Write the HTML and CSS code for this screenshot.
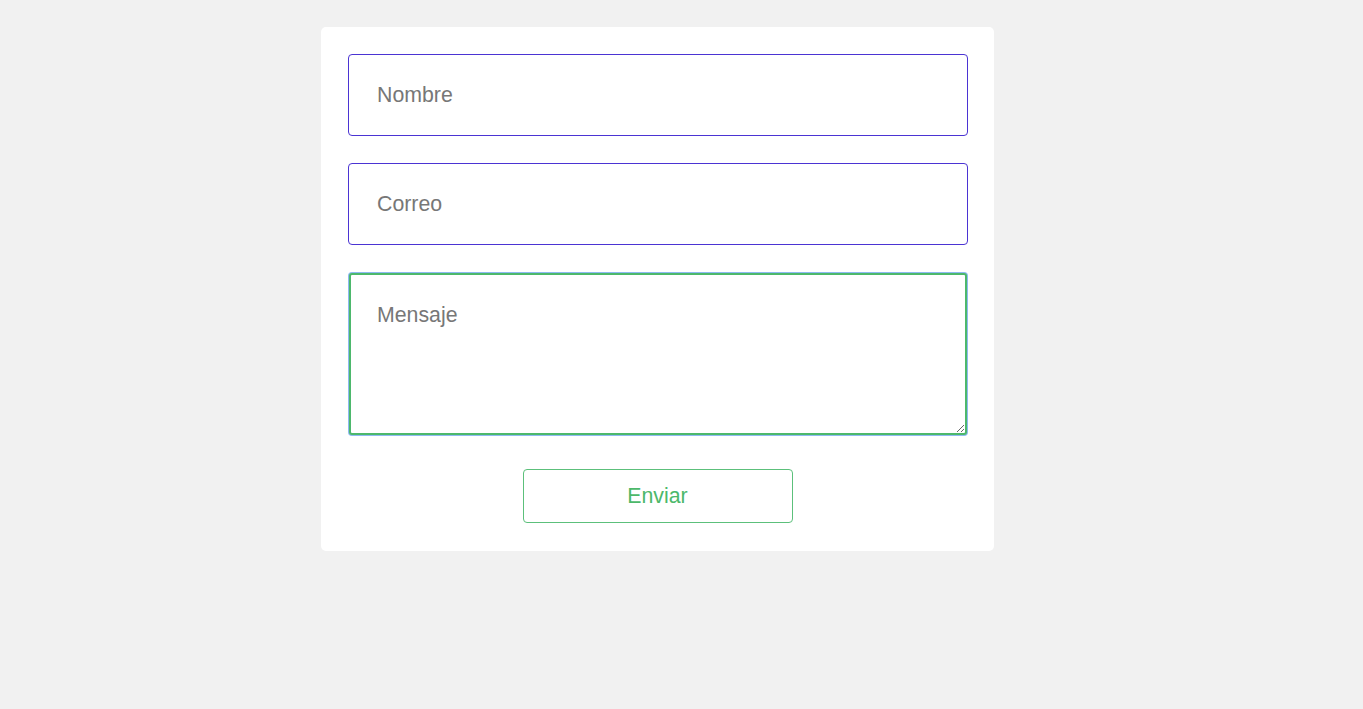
FILE: index.html
```html
<!DOCTYPE html>
<html lang="es">
<head>
<meta charset="utf-8">
<title>Contacto</title>
<link rel="stylesheet" href="styles.css">
</head>
<body>
<main class="page">
  <form class="card">
    <input class="field" type="text" placeholder="Nombre">
    <input class="field" type="email" placeholder="Correo">
    <textarea class="field message" placeholder="Mensaje" autofocus></textarea>
    <div class="actions">
      <button class="send" type="button">Enviar</button>
    </div>
  </form>
</main>
</body>
</html>
```
FILE: styles.css
```css
html, body {
  margin: 0;
  padding: 0;
  background: #f1f1f1;
  font-family: "Liberation Sans", Arial, sans-serif;
}
.page {
  padding: 27px 0 0 321px;
  display: flex;
}
.card {
  width: 673px;
  box-sizing: border-box;
  background: #ffffff;
  border-radius: 5px;
  padding: 27px 27px 28px;
  display: flex;
  flex-direction: column;
  gap: 27px;
}
.field {
  display: block;
  width: 620px;
  height: 82px;
  box-sizing: border-box;
  margin: 0;
  border: 1px solid #4b34d3;
  border-radius: 4px;
  padding: 0 27px 0 28px;
  font-family: "Liberation Sans", Arial, sans-serif;
  font-size: 21.3px;
  color: #333;
  background: #fff;
  outline: none;
}
.field::placeholder {
  color: #777777;
  opacity: 1;
}
.message {
  width: 618px;
  height: 162px;
  margin: 1px;
  padding: 28px 26px 20px 26px;
  border: 2px solid #4db86c;
  border-radius: 3px;
  box-shadow: 0 0 0 1px #8fb9f2;
  resize: vertical;
  line-height: 24px;
}
.message:focus {
  outline: none;
}
.actions {
  display: flex;
  justify-content: center;
  padding-top: 6px;
}
.send {
  width: 270px;
  height: 54px;
  box-sizing: border-box;
  background: #fff;
  border: 1px solid #5cc07b;
  border-radius: 4px;
  color: #4cb86a;
  font-family: "Liberation Sans", Arial, sans-serif;
  font-size: 21.3px;
  cursor: pointer;
}
```
